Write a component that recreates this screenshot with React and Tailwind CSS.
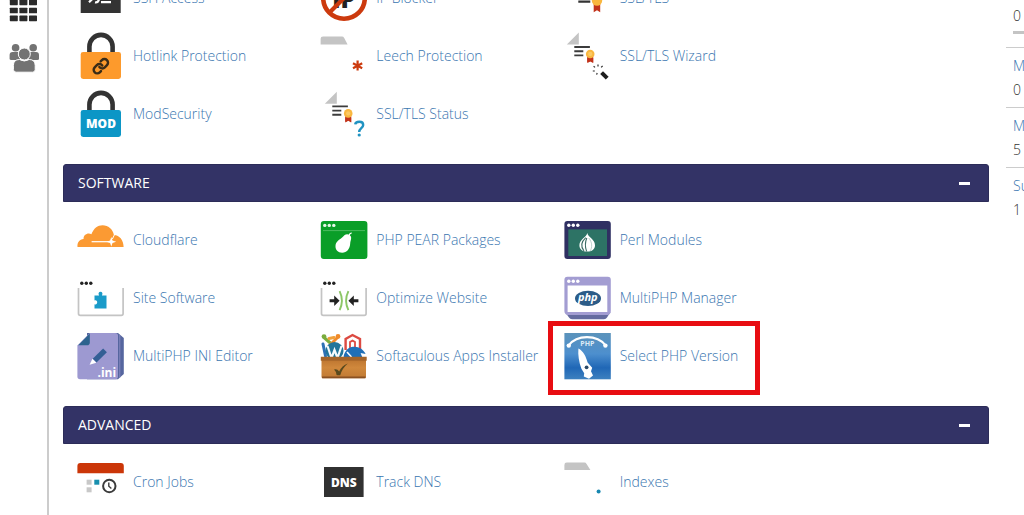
const INK = "#333333";
const RED = "#cc3a0e";
const BLUE = "#0c96c6";

function Svg({ children }) {
  return (
    <svg viewBox="0 0 48 48" className="size-12 shrink-0" aria-hidden="true">
      {children}
    </svg>
  );
}

function Padlock({ fill, children }) {
  return (
    <Svg>
      <path d="M12.4 22v-7.5a11.6 11.6 0 0 1 23.2 0V22" fill="none" stroke={INK} strokeWidth="4.6" />
      <rect x="3.7" y="20" width="40.3" height="27" rx="2.4" fill={fill} />
      {children}
    </Svg>
  );
}

function SshIcon() {
  return (
    <Svg>
      <rect x="3.7" y="9" width="40" height="30" fill={INK} />
      <path d="M12 18.600l5 4.800-5 4.800M18 28.400q3 .6 4-3M24 28.200h10" fill="none" stroke="#fff" strokeWidth="2.200" />
    </Svg>
  );
}

function HotlinkIcon() {
  return (
    <Padlock fill="#fd9a2c">
      <g transform="translate(15.2 25.6) scale(0.72)" fill="none" stroke="#3a2c17" strokeWidth="3.4" strokeLinecap="round">
        <path d="M10 13a5 5 0 0 0 7.54.54l3-3a5 5 0 0 0-7.07-7.07l-1.72 1.71" />
        <path d="M14 11a5 5 0 0 0-7.54-.54l-3 3a5 5 0 0 0 7.07 7.07l1.71-1.71" />
      </g>
    </Padlock>
  );
}

function ModIcon() {
  return (
    <Padlock fill={BLUE}>
      <text x="24" y="38" textAnchor="middle" fill="#fff" fontFamily="Open Sans, sans-serif" fontWeight="800" fontSize="12">
        MOD
      </text>
    </Padlock>
  );
}

function IpBlockerIcon() {
  return (
    <Svg>
      <text x="24" y="33.5" textAnchor="middle" fill="#222" fontFamily="Open Sans, sans-serif" fontWeight="800" fontSize="24">
        IP
      </text>
      <circle cx="24" cy="24" r="20.8" fill="none" stroke={RED} strokeWidth="4.6" />
      <path d="M38.7 9.3L9.3 38.7" stroke={RED} strokeWidth="4.2" />
    </Svg>
  );
}

function Ribbon({ x, y, r }) {
  return (
    <g>
      <path d={`M${x - r * 0.7} ${y + r * 0.6}h${r * 1.4}v${r * 1.4}l${-r * 0.7} ${-r * 0.4}l${-r * 0.7} ${r * 0.4}z`} fill="#c2331b" />
      <circle cx={x} cy={y} r={r} fill="#f9b73f" />
      <circle cx={x} cy={y} r={r * 0.5} fill="#fcc964" />
    </g>
  );
}

function SslIcon() {
  return (
    <Svg>
      <path d="M14.3 22h15M14.3 27.700h12" stroke={INK} strokeWidth="2.2" />
      <path d="M29.700 29h6.500v9.300l-3.200-2-3.300 2z" fill="#c2331b" />
      <circle cx="33" cy="26.500" r="5.200" fill="#f9b73f" />
    </Svg>
  );
}

function Certificate() {
  return (
    <g>
      <path d="M4 13.4L16 1.4v12z" fill="#c4c4c4" />
      <path d="M11.5 16h15.6M11.5 20.2h9M11.5 24.4h9" stroke="#3c3c3c" strokeWidth="1.9" />
      <path d="M24.600 27h5.800v5l-2.900-1.600-2.900 1.600z" fill="#c2331b" />
      <Ribbon x={27.4} y={23} r={4.3} />
    </g>
  );
}

function SslWizardIcon() {
  return (
    <Svg>
      <g transform="translate(-1.2 -1)">
        <Certificate />
      </g>
      <path d="M37.6 40.6l5.6 5.6" stroke="#1d1d1d" strokeWidth="4" />
      <path
        d="M29.600 34.200l1.400 1.200M34 32.400v2M38.600 33.800l-1.400 1.600M28.800 39h2M32.600 42.600l.6-1.600"
        stroke="#2b2b2b"
        strokeWidth="1.2"
      />
    </Svg>
  );
}

function SslStatusIcon() {
  return (
    <Svg>
      <g transform="translate(0.8 0.4)">
        <Certificate />
      </g>
      <path d="M35.2 34.400c.4-3.400 8-3.800 8 .5 0 3.200-4 3.300-4 7" fill="none" stroke="#2093c2" strokeWidth="2.4" />
      <circle cx="39.2" cy="45" r="1.6" fill="#2093c2" />
    </Svg>
  );
}

function LeechIcon() {
  return (
    <Svg>
      <path d="M.6 12.4V7q0-2.4 2.4-2.4h19q1.4 0 2.2 1.4l3.4 6.4z" fill="#c4c4c4" />
      <path d="M37.6 28.6v10M33 31.2l9.2 5M33 36.2l9.2-5" stroke={RED} strokeWidth="2.2" />
    </Svg>
  );
}

function CloudflareIcon() {
  return (
    <Svg>
      <path
        d="M.5 31c-.4-4.600 2-7.600 6.100-8-.4-4.200 4.200-6.800 7.800-4.800C16.600 12.600 20.600 9.300 25.600 9.300c5.600 0 10.200 4 11.300 9.600 5.800.2 9.800 5.400 9.700 12.100z"
        fill="#fb9a33"
      />
      <path d="M37.600 18.400l-2.200 4.600" stroke="#fff" strokeWidth="1" />
      <path d="M14.600 25.700h19" stroke="#fff" strokeWidth="1.200" />
      <path d="M34.300 21l1.200 3.500 3.700 1.200-3.700 1.200-1.200 3.600-1.200-3.600-3.600-1.200 3.600-1.200z" fill="#fff" />
    </Svg>
  );
}

function Dots({ y, fill }) {
  return (
    <g fill={fill}>
      <circle cx="4.8" cy={y} r="1.7" />
      <circle cx="9.3" cy={y} r="1.7" />
      <circle cx="13.8" cy={y} r="1.7" />
    </g>
  );
}

function BrowserFrame({ children }) {
  return (
    <Svg>
      <Dots y={9.3} fill="#222" />
      <path d="M1.5 14v25.500q0 1.800 1.800 1.800h41q1.800 0 1.800-1.800V14" fill="none" stroke="#c4c4c4" strokeWidth="1.700" />
      {children}
    </Svg>
  );
}

function SiteSoftwareIcon() {
  return (
    <BrowserFrame>
      <path
        d="M17.500 21.400h4.600c-1.200-1.800-.4-3.600 1.400-3.600s2.600 1.800 1.400 3.600h4.600v13.200H17.500v-4.300c3.600 1.400 3.600-5.200 0-3.800z"
        fill="#1a9bc9"
      />
    </BrowserFrame>
  );
}

function OptimizeIcon() {
  return (
    <BrowserFrame>
      <path d="M9.600 26.700h6M38.400 26.700h-6" stroke="#222" strokeWidth="3" />
      <path d="M14.200 21.500l5.400 5.200-5.400 5.200zM33.800 21.500l-5.400 5.200 5.400 5.200z" fill="#222" />
      <path d="M19.600 17.200q4.600 9.500 0 19M28.400 17.200q-4.600 9.500 0 19" fill="none" stroke="#8cc665" strokeWidth="1.900" />
    </BrowserFrame>
  );
}

function PearIcon() {
  return (
    <Svg>
      <rect x=".8" y="5" width="46.600" height="38" rx="3" fill="#0a9e28" />
      <Dots y={9.4} fill="#e6f7e8" />
      <path d="M3 14.600h42" stroke="#5cc06d" strokeWidth=".8" />
      <path d="M29.600 19c3 2.400.8 5 .6 8.600-.3 5.400-3.400 9.200-8 9.200-4.300 0-7-3-6.700-7 .3-4.300 3.600-5.600 6.600-8.200 2-1.800 3.800-4.500 7.500-2.600z" fill="#fff" />
      <path d="M29 19.600q.4-2.200 2.600-2.800" fill="none" stroke="#fff" strokeWidth="1.300" />
    </Svg>
  );
}

function PerlIcon() {
  return (
    <Svg>
      <rect x=".4" y="5" width="46.400" height="38" rx="3" fill="#2f3062" />
      <rect x="4.300" y="13.400" width="38.700" height="26.600" fill="#2d7365" />
      <Dots y={9.300} fill="#fff" />
      <path d="M23.400 17c.2 4 7.600 6 7.600 12.200 0 4-3.200 6.400-7.800 6.400s-7.800-2.400-7.800-6.400C15.400 23.400 22.400 21.400 23.400 17z" fill="#fff" />
      <path d="M21.800 21.600c-5 4.600-5 9.400-1.800 13.400M22.800 22c-2 4.600-1.600 9.400-.2 13.400" fill="none" stroke="#3b6a63" strokeWidth="1.100" />
      <path d="M24.800 22c3.600 4.600 3.600 9.400 1.200 13.200" fill="none" stroke="#9dbbb5" strokeWidth=".7" />
    </Svg>
  );
}

function MultiPhpIcon() {
  return (
    <Svg>
      <path d="M1 38h45.500l-3.500 5.500q-1 1.700-3 1.700H8q-2 0-3-1.700z" fill="#646b9f" />
      <path d="M.4 5.700q0-3 3-3h40.400q3 0 3 3V37q0 3-3 4H3.400q-3-1-3-4z" fill="#a39dd2" />
      <path d="M3.600 11.400h39.700V38H3.600z" fill="#fff" />
      <Dots y={7.200} fill="#fff" />
      <ellipse cx="24" cy="24.400" rx="13" ry="7.600" fill="#2c5c88" />
      <text x="23.800" y="27.400" textAnchor="middle" fill="#fff" fontFamily="Open Sans, sans-serif" fontWeight="700" fontStyle="italic" fontSize="11">
        php
      </text>
    </Svg>
  );
}

function IniIcon() {
  return (
    <Svg>
      <path d="M10 1h31l5.800 5v36l-5.800 5.200H10z" fill="#56669f" />
      <path d="M42.800 3v42.500" stroke="#8f8fc8" strokeWidth=".8" />
      <path d="M12.800 1h25.600q2.600 0 2.600 2.600v41q0 2.600-2.600 2.600H3q-2.600 0-2.600-2.600v-31z" fill="#9d99d1" />
      <path d="M1.200 13.200L12.800 1.600v8.800q0 2.800-2.800 2.800z" fill="#2d638e" />
      <path d="M17.600 28.600L28 18.400" stroke="#345f95" strokeWidth="5.400" />
      <path d="M15.400 26.800l4 4-6.800 2z" fill="#fff" />
      <text x="29.800" y="44.600" textAnchor="middle" fill="#fff" fontFamily="Open Sans, sans-serif" fontWeight="700" fontSize="12">
        .ini
      </text>
    </Svg>
  );
}

function SoftaculousIcon() {
  return (
    <Svg>
      <defs>
        <linearGradient id="wood" x1="0" y1="0" x2="0" y2="1">
          <stop offset="0" stopColor="#b8702c" />
          <stop offset=".5" stopColor="#d0883c" />
          <stop offset="1" stopColor="#c07a34" />
        </linearGradient>
      </defs>
      <g fill="none" strokeWidth="3" strokeLinecap="round">
        <path d="M4 5.500l8 7" stroke="#7aac3e" />
        <path d="M18 5l-8 8" stroke="#ef8a2b" />
        <path d="M9 6.500l5-1" stroke="#f0a03a" />
        <path d="M3 12l2.500 12" stroke="#2d70b5" />
      </g>
      <circle cx="4" cy="4.600" r="2.400" fill="#7aac3e" />
      <circle cx="18" cy="4.400" r="2.400" fill="#ef8a2b" />
      <circle cx="14.500" cy="19" r="9" fill="#21759b" />
      <path d="M7.500 14l4 12 3-8 3 8 4-12" fill="none" stroke="#f4f9fc" strokeWidth="2.200" />
      <path d="M25.600 18V7L32.500 3l7.500 4v11" fill="#fff" stroke="#dc4a42" strokeWidth="2.400" />
      <path d="M30 17V10l2.500-1.400L35 10v7" fill="none" stroke="#dc4a42" strokeWidth="1.800" />
      <path d="M23.600 26c0-6 4-10 8-11 6-1.400 12 2 14 7l-5-1 2 5z" fill="#1f6fb8" />
      <path d="M27 20l4.500 5" stroke="#fff" strokeWidth="1.600" />
      <path d="M1.500 25h44.500v19.700q0 1.600-1.600 1.600H3.100q-1.600 0-1.600-1.600z" fill="url(#wood)" />
      <path d="M.8 24.800h45.900v4H.8z" fill="#a4642a" />
      <path d="M2 44.600h43.500v1.700H2z" fill="#8a5122" />
      <path d="M14 37.600q3-1.200 5.200 2 2.600-6 8.600-8-5.400 4.600-7.600 11.600-2.400.4-3.600-.2 0-3-2.600-5.400z" fill="#5a4a1e" />
    </Svg>
  );
}

function SelectPhpIcon() {
  return (
    <Svg>
      <defs>
        <linearGradient id="gauge" x1="0" y1="0" x2="0" y2="1">
          <stop offset="0" stopColor="#5b93bb" />
          <stop offset=".45" stopColor="#4d8fce" />
          <stop offset=".75" stopColor="#2067b6" />
          <stop offset="1" stopColor="#3c80bf" />
        </linearGradient>
      </defs>
      <rect x=".4" y="1" width="46.400" height="46.300" fill="url(#gauge)" />
      <path d="M4.600 13.400C13 2.400 33 2.400 41.600 13.400" fill="none" stroke="#fff" strokeWidth="2.200" />
      <circle cx="4.800" cy="13.600" r="2.200" fill="#fff" />
      <circle cx="41.400" cy="13.600" r="2.200" fill="#fff" />
      <text x="23.400" y="14" textAnchor="middle" fill="#dcebf7" fontFamily="Open Sans, sans-serif" fontWeight="700" fontSize="7">
        PHP
      </text>
      <path d="M14.400 16.400c5 2.600 7.600 8 9.200 14l4.600 5.400-1.200 3.400 2 4.400-4 3.200-5.200-2.200 .4-3.400-2.800-4.400c-2.400-7-3.600-13.800-3-20.400z" fill="#fff" />
      <circle cx="22.600" cy="35.300" r="1.900" fill="#2b4a68" />
    </Svg>
  );
}

function CronIcon() {
  return (
    <Svg>
      <path d="M.4 15.200V8q0-3 3-3h40.400q3 0 3 3v7.200z" fill="#cb3608" />
      <rect x="9.600" y="21.700" width="5" height="5" fill="#c8c8c8" />
      <rect x="17.300" y="21.700" width="5" height="5" fill="#188fae" />
      <rect x="9.600" y="29.300" width="5" height="5" fill="#c8c8c8" />
      <circle cx="32.300" cy="28" r="6.200" fill="#fff" stroke="#3b3b3b" strokeWidth="2" />
      <path d="M31.800 24.400v3.800l2.600 2.400" fill="none" stroke="#3b3b3b" strokeWidth="1.400" />
    </Svg>
  );
}

function DnsIcon() {
  return (
    <Svg>
      <rect x="4" y="9" width="39.600" height="30" fill="#313131" />
      <text x="23.800" y="28.900" textAnchor="middle" fill="#fff" fontFamily="Open Sans, sans-serif" fontWeight="800" fontSize="12">
        DNS
      </text>
    </Svg>
  );
}

function IndexesIcon() {
  return (
    <Svg>
      <path d="M.4 12V7q0-2.400 2.400-2.400h17.600q1.400 0 2.200 1.400l3.800 6z" fill="#c4c4c4" />
      <circle cx="34.600" cy="33.400" r="2" fill="#1787b0" />
    </Svg>
  );
}

const security = [
  { label: "SSH Access", Icon: SshIcon },
  { label: "IP Blocker", Icon: IpBlockerIcon },
  { label: "SSL/TLS", Icon: SslIcon },
  { label: "Hotlink Protection", Icon: HotlinkIcon },
  { label: "Leech Protection", Icon: LeechIcon },
  { label: "SSL/TLS Wizard", Icon: SslWizardIcon },
  { label: "ModSecurity", Icon: ModIcon },
  { label: "SSL/TLS Status", Icon: SslStatusIcon },
];

const software = [
  { label: "Cloudflare", Icon: CloudflareIcon },
  { label: "PHP PEAR Packages", Icon: PearIcon },
  { label: "Perl Modules", Icon: PerlIcon },
  { label: "Site Software", Icon: SiteSoftwareIcon },
  { label: "Optimize Website", Icon: OptimizeIcon },
  { label: "MultiPHP Manager", Icon: MultiPhpIcon },
  { label: "MultiPHP INI Editor", Icon: IniIcon },
  { label: "Softaculous Apps Installer", Icon: SoftaculousIcon },
  { label: "Select PHP Version", Icon: SelectPhpIcon, marked: true },
];

const advanced = [
  { label: "Cron Jobs", Icon: CronIcon },
  { label: "Track DNS", Icon: DnsIcon },
  { label: "Indexes", Icon: IndexesIcon },
];

const stats = [
  { label: "M", value: "0" },
  { label: "M", value: "5" },
  { label: "Su", value: "1" },
];

function AppGrid({ items }) {
  return (
    <ul className="grid max-w-[744px] grid-cols-3 pl-3.5">
      {items.map(({ label, Icon, marked }) => (
        <li key={label} className="relative flex h-[58px] items-center">
          <a href="#" className="flex items-center gap-2 font-light whitespace-nowrap text-[#3a76b0] hover:underline">
            <Icon />
            {label}
          </a>
          {marked && (
            <span className="pointer-events-none absolute -top-1.5 -left-4 h-[74px] w-[212px] border-5 border-[#e80d12]" />
          )}
        </li>
      ))}
    </ul>
  );
}

function Panel({ title, items }) {
  return (
    <section className="mt-[21px]">
      <header className="mb-[9px] flex h-[38px] items-center justify-between rounded-t-[3px] border border-[#2c2c58] bg-[#333366] pr-[18px] pl-3.5 text-white">
        <h2>{title}</h2>
        <button type="button" aria-label={`Collapse ${title}`} className="flex h-5 items-center">
          <span className="h-[3px] w-[11px] bg-white" />
        </button>
      </header>
      <AppGrid items={items} />
    </section>
  );
}

function Sidebar() {
  return (
    <nav className="w-[49px] shrink-0 border-r-2 border-[#cccccc]">
      <a href="#" aria-label="Home" className="block pl-2">
        <svg viewBox="0 0 32 24" className="h-6 w-8" fill="#2b2b2b">
          {[-0.4, 7.7, 15.6].map((y) =>
            [1.8, 11.4, 21].map((x) => <rect key={`${x}-${y}`} x={x} y={y} width="8" height="5.600" rx=".6" />)
          )}
        </svg>
      </a>
      <a href="#" aria-label="User Manager" className="mt-[18px] block pl-2">
        <svg viewBox="0 0 32 32" className="size-8" fill="#737373">
          <circle cx="7.600" cy="5.800" r="3.800" />
          <circle cx="25.200" cy="5.800" r="3.800" />
          <path d="M1.600 17v-4q0-3 3-3h5.200q2 0 2 2v6H3.400q-1.800 0-1.800-1zM31 17v-4q0-3-3-3h-5.200q-2 0-2 2v6h8.400q1.800 0 1.800-1z" />
          <circle cx="16.300" cy="12" r="6" stroke="#fff" strokeWidth="1" />
          <path d="M5.400 27.500v-4q0-6 6-6 4.900 3 9.800 0 6 0 6 6v4q0 2.700-2.700 2.700H8.100q-2.700 0-2.700-2.700z" stroke="#fff" strokeWidth="1" />
        </svg>
      </a>
    </nav>
  );
}

function Stats() {
  return (
    <aside className="ml-[17px] w-[18px] shrink-0 overflow-hidden font-light">
      <div className="h-12 border-b border-[#cccccc] pt-1.5 pl-[7px]">
        <p className="leading-5">0</p>
        <div className="mt-[5px] h-[3px] bg-[#c4c4c4]" />
      </div>
      {stats.map((s, i) => (
        <div key={i} className="h-[60px] border-b border-[#cccccc] pt-2 pl-[7px] last:border-0">
          <a href="#" className="block leading-5 text-[#3a76b0]">
            {s.label}
          </a>
          <p className="mt-1 leading-5">{s.value}</p>
        </div>
      ))}
    </aside>
  );
}

export default function App() {
  return (
    <div className="flex h-screen overflow-hidden bg-white font-['Open_Sans',sans-serif] text-sm text-[#333333]">
      <Sidebar />
      <main className="-mt-[31px] ml-3.5 min-w-0 flex-1">
        <AppGrid items={security} />
        <Panel title="SOFTWARE" items={software} />
        <Panel title="ADVANCED" items={advanced} />
      </main>
      <Stats />
    </div>
  );
}
